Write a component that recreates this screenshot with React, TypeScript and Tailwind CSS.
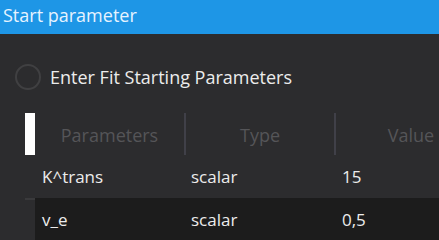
import React from "react";

const font = { fontFamily: '"Open Sans", "Noto Sans", sans-serif' };

export default function App() {
  const rows = [
    { p: "K^trans", t: "scalar", v: "15", bg: "bg-[#2c2c2e]" },
    { p: "v_e", t: "scalar", v: "0,5", bg: "bg-[#1c1c1c]" },
  ];
  return (
    <div className="w-[439px] h-[240px] overflow-hidden bg-[#2c2c2e]" style={font}>
      <div className="h-[34px] bg-[#1e96e6] text-[#e6f3ff] text-[18px] leading-[30px] pl-[3px]">
        Start parameter
      </div>
      <div className="flex items-center h-[26px] mt-[30px] pl-[15px]">
        <div className="w-[26px] h-[26px] rounded-full border-2 border-[#404042]" />
        <span className="ml-[9px] text-[18px] text-[#ececec]">Enter Fit Starting Parameters</span>
      </div>
      <div className="mt-[23px] ml-[25px] w-[500px]">
        <div className="flex h-[42px] items-center">
          <div className="w-[10px] h-[42px] bg-white" />
          <div className="w-[149px] text-center text-[18px] leading-[26px] pt-[2px] text-[#555558]">Parameters</div>
          <div className="w-[2px] h-[42px] bg-[#404048]" />
          <div className="w-[148px] text-center text-[18px] leading-[26px] pt-[2px] text-[#555558]">Type</div>
          <div className="w-[2px] h-[42px] bg-[#404048]" />
          <div className="w-[150px] text-center text-[18px] leading-[26px] pt-[2px] text-[#555558]">Value</div>
        </div>
        {rows.map((r, i) => (
          <div key={i} className="flex h-[43px]">
            <div className={`w-[10px] ${i === 1 ? "bg-[#2c2c2e] border-t-2 border-[#3a3a3c]" : "bg-[#2c2c2e]"}`} />
            <div className={`flex flex-1 items-center text-[17px] text-[#ececec] ${r.bg}`}>
              <div className="w-[149px] pl-[7px]">{r.p}</div>
              <div className="w-[150px] pl-[7px]">{r.t}</div>
              <div className="w-[150px] pl-[8px]">{r.v}</div>
            </div>
          </div>
        ))}
      </div>
    </div>
  );
}
